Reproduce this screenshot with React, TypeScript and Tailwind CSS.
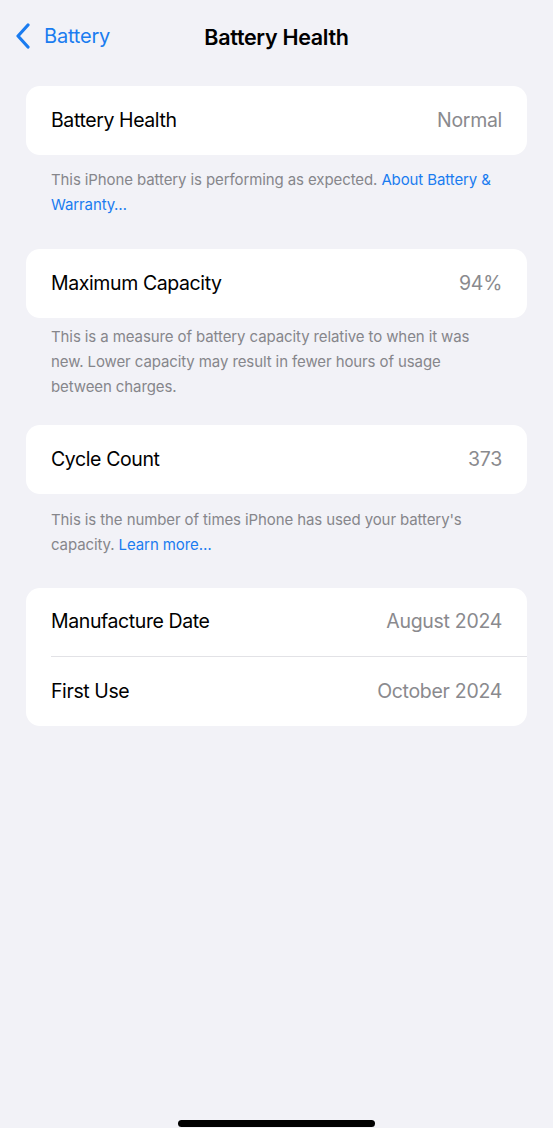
import React from "react";

const font = { fontFamily: "Inter, 'Noto Sans', 'Liberation Sans', sans-serif" };

function Row({ label, value, divider }: { label: string; value: string; divider?: boolean }) {
  return (
    <div className="flex h-[69px] items-center pl-[25px]">
      <div className={`flex h-full flex-1 items-center justify-between pr-[25px] ${divider ? "border-b border-[#e2e2e6]" : ""}`}>
        <span className="text-[19.5px] text-black tracking-[-0.4px]">{label}</span>
        <span className="text-[19.5px] text-[#8a8a8e] tracking-[-0.3px]">{value}</span>
      </div>
    </div>
  );
}

function Footer({ children, className }: { children: React.ReactNode; className: string }) {
  return (
    <p className={`px-[25px] text-[15px] leading-[25px] text-[#86868b] tracking-[-0.1px] ${className}`}>{children}</p>
  );
}

export default function App() {
  return (
    <div style={font} className="relative flex h-[1128px] w-[553px] flex-col bg-[#f2f2f7]">
      <div className="relative flex h-[72px] items-center">
        <div className="flex items-center pl-[15px] text-[#1a7cf0]">
          <svg width="16" height="26" viewBox="0 0 16 26" fill="none">
            <path d="M13 2 L3 13 L13 24" stroke="currentColor" strokeWidth="3.2" strokeLinecap="round" strokeLinejoin="round" />
          </svg>
          <span className="ml-[13px] text-[20px] tracking-[-0.2px]">Battery</span>
        </div>
        <div className="absolute left-0 right-0 top-[21px] text-center text-[21.5px] font-semibold text-black tracking-[-0.3px]">
          Battery Health
        </div>
      </div>

      <div className="mt-[14px] px-[26px]">
        <div className="overflow-hidden rounded-[14px] bg-white">
          <Row label="Battery Health" value="Normal" />
        </div>
        <Footer className="mt-[12px]">
          This iPhone battery is performing as expected. <span className="text-[#1a7cf0]">About Battery &amp; Warranty…</span>
        </Footer>

        <div className="mt-[32px] overflow-hidden rounded-[14px] bg-white">
          <Row label="Maximum Capacity" value="94%" />
        </div>
        <Footer className="mt-[6px]">
          This is a measure of battery capacity relative to when it was new. Lower capacity may result in fewer hours of usage between charges.
        </Footer>

        <div className="mt-[26px] overflow-hidden rounded-[14px] bg-white">
          <Row label="Cycle Count" value="373" />
        </div>
        <Footer className="mt-[13px]">
          This is the number of times iPhone has used your battery's capacity. <span className="text-[#1a7cf0]">Learn more…</span>
        </Footer>

        <div className="mt-[31px] overflow-hidden rounded-[14px] bg-white">
          <Row label="Manufacture Date" value="August 2024" divider />
          <Row label="First Use" value="October 2024" />
        </div>
      </div>

      <div className="mt-auto mb-[1px] flex justify-center">
        <div className="h-[7px] w-[197px] rounded-full bg-black" />
      </div>
    </div>
  );
}
